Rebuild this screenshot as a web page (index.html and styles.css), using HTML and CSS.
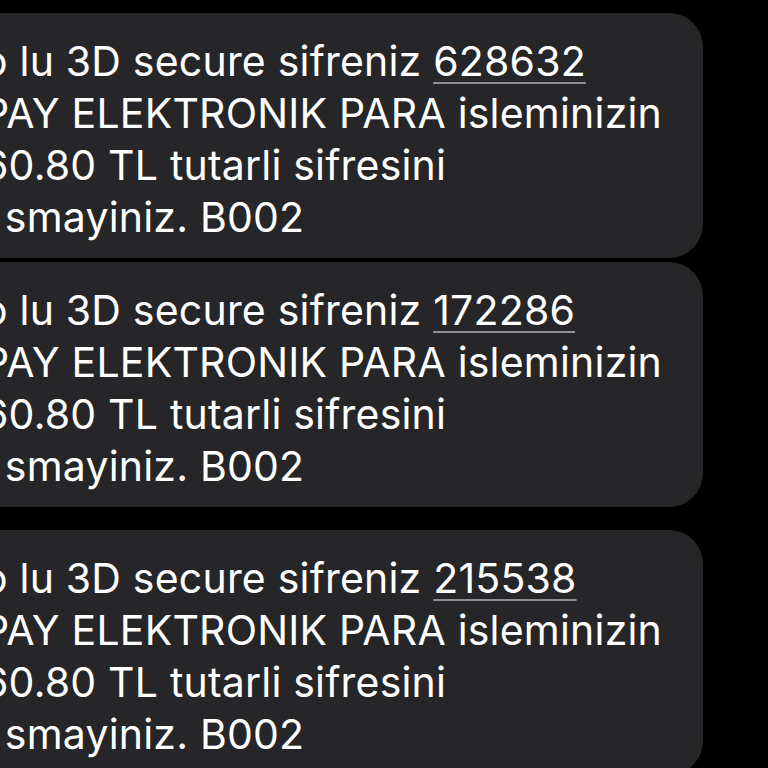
FILE: index.html
```html
<!DOCTYPE html>
<html lang="tr">
<head>
<meta charset="utf-8">
<title>Mesajlar</title>
<link rel="stylesheet" href="styles.css">
</head>
<body>
<main class="thread">
  <div class="bubble">
    <div class="ln">o lu 3D secure sifreniz <span class="code">628632</span></div>
    <div class="ln">PAY ELEKTRONIK PARA isleminizin</div>
    <div class="ln">60.80 TL tutarli sifresini</div>
    <div class="ln">ı smayiniz. B002</div>
  </div>
  <div class="bubble">
    <div class="ln">o lu 3D secure sifreniz <span class="code">172286</span></div>
    <div class="ln">PAY ELEKTRONIK PARA isleminizin</div>
    <div class="ln">60.80 TL tutarli sifresini</div>
    <div class="ln">ı smayiniz. B002</div>
  </div>
  <div class="bubble later">
    <div class="ln">o lu 3D secure sifreniz <span class="code">215538</span></div>
    <div class="ln">PAY ELEKTRONIK PARA isleminizin</div>
    <div class="ln">60.80 TL tutarli sifresini</div>
    <div class="ln">ı smayiniz. B002</div>
  </div>
</main>
</body>
</html>
```
FILE: styles.css
```css
html, body {
  margin: 0;
  padding: 0;
  background: #000;
  width: 768px;
  height: 768px;
  overflow: hidden;
}
.thread {
  display: flex;
  flex-direction: column;
  gap: 4px;
  padding-top: 13px;
}
.bubble {
  background: #262628;
  border-radius: 34px;
  margin-left: -60px;
  margin-right: 65px;
  padding: 22px 0 15px 43px;
  color: #fff;
  font-family: "Inter", "Roboto", sans-serif;
  font-size: 41px;
  line-height: 52px;
  letter-spacing: 0.2px;
  white-space: nowrap;
}
.bubble.later {
  margin-top: 19px;
}
.code {
  text-decoration: underline;
  text-decoration-color: #8d8d92;
  text-decoration-thickness: 2px;
  text-underline-offset: 6px;
}
```
